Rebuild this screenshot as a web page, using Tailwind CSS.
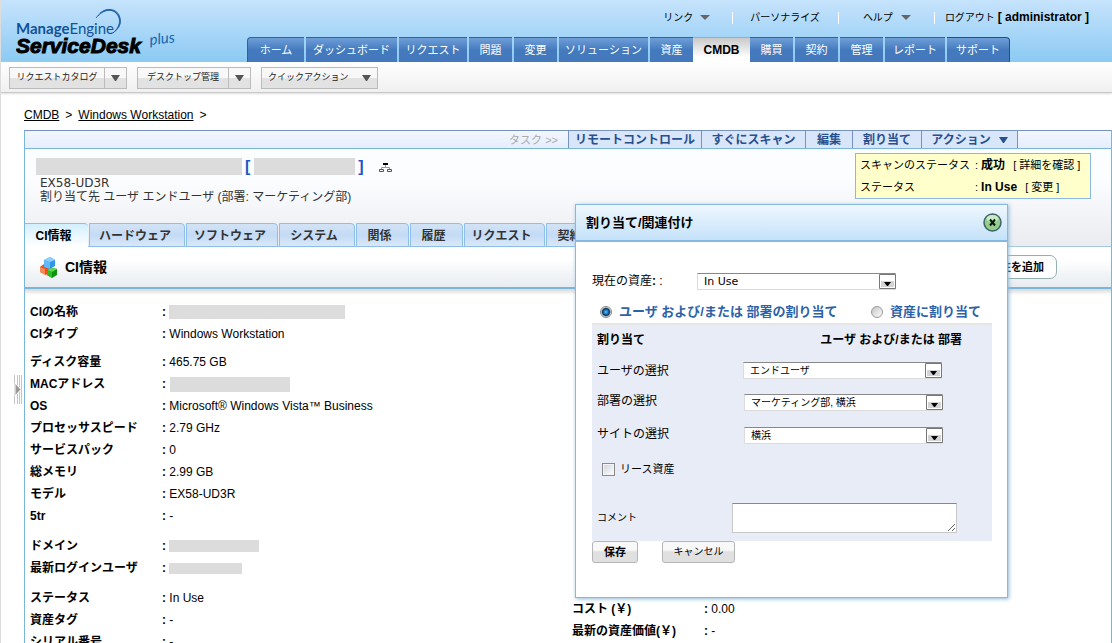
<!DOCTYPE html>
<html lang="ja">
<head>
    <meta charset="UTF-8">
    <meta name="viewport" content="width=device-width, initial-scale=1.0">
    <title>ManageEngine ServiceDesk Plus</title>
    <script src="https://cdn.jsdelivr.net/npm/@tailwindcss/browser@4"></script>
</head>
<body class="relative flex h-screen flex-col overflow-hidden border-l border-[#dcdcdc] bg-white font-['Liberation_Sans','Noto_Sans_CJK_JP',sans-serif] text-[12px] leading-[16px] text-black">

    <!-- Header -->
    <header class="flex h-[62px] shrink-0 justify-between bg-linear-to-b from-[#c6e3fc] to-[#8bcaf3]">
        <svg class="ml-[15px] mt-[6px] h-[56px] w-[170px] shrink-0" viewBox="0 0 170 56" role="img" aria-label="ManageEngine ServiceDesk plus">
            <g fill="none" stroke="#2263a8" stroke-width="0.900">
                <path d="M80 12 C86 3 95 2 100 7 C106 13 104 21 97 27"/>
                <path d="M82 10 C89 2 99 3 102 9 C106 16 103 22 98 26"/>
                <path d="M84 7 C92 1 100 4 103 10 C106 17 103 22 98 26"/>
                <path d="M87 5 C95 1 103 5 104 12 C105 18 103 22 98 26"/>
            </g>
            <text x="0" y="28" font-family="Lato, sans-serif" font-size="15" fill="#12529a"><tspan font-weight="700">Manage</tspan><tspan>Engine</tspan></text>
            <text x="0" y="47" font-family="Liberation Sans, sans-serif" font-size="21" font-weight="700" font-style="italic" fill="#000" stroke="#000" stroke-width="1">ServiceDesk</text>
            <text x="134" y="39" transform="rotate(-6 134 39)" font-family="Lato, sans-serif" font-size="15" font-style="italic" fill="#1668b0">plus</text>
        </svg>

        <div class="relative flex flex-1 flex-col justify-between">
            <!-- User links -->
            <nav class="mr-[23px] mt-[9px] flex items-center justify-end text-[10px]">
                <a href="#">リンク</a>
                <svg class="ml-[7px] mr-[22px] h-[5px] w-[10px]" viewBox="0 0 10 5"><path d="M0 0h10L5 5z" fill="#666"/></svg>
                <span class="mr-[17px] h-[12px] w-px bg-white"></span>
                <a href="#">パーソナライズ</a>
                <span class="ml-[18px] mr-[24px] h-[12px] w-px bg-white"></span>
                <a href="#">ヘルプ</a>
                <svg class="ml-[8px] mr-[23px] h-[5px] w-[10px]" viewBox="0 0 10 5"><path d="M0 0h10L5 5z" fill="#666"/></svg>
                <span class="mr-[10px] h-[12px] w-px bg-white"></span>
                <a href="#">ログアウト <b class="text-[12px]">[ administrator ]</b></a>
            </nav>

            <!-- Main tabs -->
            <nav class="ml-[61px] flex h-[25px] gap-[2px] text-center text-[11px] leading-[24px] text-white">
                <a href="#" class="w-[57px] rounded-tl-[4px] border-l border-t border-[#2d61a5] bg-linear-to-b from-[#6f9fd9] to-[#447abd] to-50%">ホーム</a>
                <a href="#" class="w-[91px] border-t border-[#2d61a5] bg-linear-to-b from-[#6f9fd9] to-[#447abd] to-50%">ダッシュボード</a>
                <a href="#" class="w-[68px] border-t border-[#2d61a5] bg-linear-to-b from-[#6f9fd9] to-[#447abd] to-50%">リクエスト</a>
                <a href="#" class="w-[43px] border-t border-[#2d61a5] bg-linear-to-b from-[#6f9fd9] to-[#447abd] to-50%">問題</a>
                <a href="#" class="w-[43px] border-t border-[#2d61a5] bg-linear-to-b from-[#6f9fd9] to-[#447abd] to-50%">変更</a>
                <a href="#" class="w-[89px] border-t border-[#2d61a5] bg-linear-to-b from-[#6f9fd9] to-[#447abd] to-50%">ソリューション</a>
                <a href="#" class="w-[43px] border-t border-[#2d61a5] bg-linear-to-b from-[#6f9fd9] to-[#447abd] to-50%">資産</a>
                <a href="#" class="-mx-[2px] w-[57px] border-t border-[#aaa] bg-linear-to-b from-[#c9c9c9] to-white to-80% text-[12px] font-bold text-black">CMDB</a>
                <a href="#" class="w-[43px] border-t border-[#2d61a5] bg-linear-to-b from-[#6f9fd9] to-[#447abd] to-50%">購買</a>
                <a href="#" class="w-[43px] border-t border-[#2d61a5] bg-linear-to-b from-[#6f9fd9] to-[#447abd] to-50%">契約</a>
                <a href="#" class="w-[43px] border-t border-[#2d61a5] bg-linear-to-b from-[#6f9fd9] to-[#447abd] to-50%">管理</a>
                <a href="#" class="w-[60px] border-t border-[#2d61a5] bg-linear-to-b from-[#6f9fd9] to-[#447abd] to-50%">レポート</a>
                <a href="#" class="w-[63px] rounded-tr-[4px] border-r border-t border-[#1f4f93] bg-linear-to-b from-[#6f9fd9] to-[#447abd] to-50%">サポート</a>
            </nav>
        </div>
    </header>

    <!-- Quick toolbar -->
    <div class="flex h-[31px] shrink-0 items-start gap-[10px] border-b border-[#c8c8c8] bg-linear-to-b from-white to-[#f0f0f0] pl-[8px] pt-[5px] text-[9px] text-[#222] shadow-[0_1px_2px_#ddd]">
        <div class="flex h-[22px] w-[118px] border border-[#bbb] bg-linear-to-b from-[#f8f8f8] from-50% to-[#e2e2e2] to-50%">
            <button class="flex-1 border-r border-[#bbb] pb-[2px]">リクエストカタログ</button>
            <button class="flex w-[21px] items-center justify-center" aria-label="リクエストカタログを開く"><svg class="h-[6px] w-[9px]" viewBox="0 0 9 6"><path d="M0 0h9L5 6H4z" fill="#555"/></svg></button>
        </div>
        <div class="flex h-[22px] w-[114px] border border-[#bbb] bg-linear-to-b from-[#f8f8f8] from-50% to-[#e2e2e2] to-50%">
            <button class="flex-1 border-r border-[#bbb] pb-[2px]">デスクトップ管理</button>
            <button class="flex w-[21px] items-center justify-center" aria-label="デスクトップ管理を開く"><svg class="h-[6px] w-[9px]" viewBox="0 0 9 6"><path d="M0 0h9L5 6H4z" fill="#555"/></svg></button>
        </div>
        <button class="flex h-[22px] w-[117px] items-center justify-between border border-[#bbb] bg-linear-to-b from-[#f8f8f8] from-50% to-[#e2e2e2] to-50% px-[6px]">
            <span class="pb-[2px]">クイックアクション</span>
            <svg class="h-[6px] w-[9px]" viewBox="0 0 9 6"><path d="M0 0h9L5 6H4z" fill="#555"/></svg>
        </button>
    </div>

    <!-- Breadcrumb -->
    <nav class="flex shrink-0 gap-[6px] pb-[7px] pl-[23px] pt-[14px]">
        <a href="#" class="underline">CMDB</a><span>&gt;</span><a href="#" class="underline">Windows Workstation</a><span>&gt;</span>
    </nav>

    <main class="ml-[23px] flex-1 border-x border-t border-[#7ab5da] border-t-[#7892c0]">
        <!-- Task bar -->
        <div class="flex h-[18px] border-b border-[#7ab5da] bg-linear-to-b from-[#f2f6ff] to-[#e6eefc] font-bold leading-[18px] text-[#27508f]">
            <div class="w-[543px] pr-[10px] text-right text-[11px] font-normal text-[#aaa]">タスク &gt;&gt;</div>
            <a href="#" class="w-[133px] border-l border-[#7892c0] bg-[#d9e5f9] text-center">リモートコントロール</a>
            <a href="#" class="w-[104px] border-l border-[#7892c0] bg-[#d9e5f9] text-center">すぐにスキャン</a>
            <a href="#" class="w-[47px] border-l border-[#7892c0] bg-[#d9e5f9] text-center">編集</a>
            <a href="#" class="w-[69px] border-l border-[#7892c0] bg-[#d9e5f9] text-center">割り当て</a>
            <a href="#" class="flex w-[97px] items-center justify-center gap-[8px] border-x border-[#7892c0] bg-[#d9e5f9]">アクション
                <svg class="h-[6px] w-[9px]" viewBox="0 0 9 6"><path d="M0 0h9L5 6H4z" fill="#27508f"/></svg>
            </a>
        </div>

        <!-- Asset summary -->
        <section class="flex h-[98px] flex-col justify-between border-b border-[#a5c8de] bg-linear-to-b from-[#fcfdff] from-30% to-[#e9ecf0]">
            <div class="flex items-start justify-between pl-[11px] pr-[20px] pt-[4px]">
                <div class="pt-[4px] text-[#333]">
                    <div class="flex h-[19px] items-center">
                        <span class="h-[17px] w-[206px] bg-[#dcdcdc]"></span>
                        <b class="ml-[3px] text-[16px] text-[#1f55c4]">[</b>
                        <span class="ml-[4px] h-[17px] w-[101px] bg-[#dcdcdc]"></span>
                        <b class="ml-[3px] text-[16px] text-[#1f55c4]">]</b>
                        <svg class="ml-[15px] mt-[3px] h-[10px] w-[13px]" viewBox="0 0 13 10" fill="none" stroke="#555"><path d="M6.500 2v3M2.500 7V4.500h8V7" stroke="#999"/><path d="M.5 6.500h4v2h-4zM8.500 6.500h4v2h-4z"/><path d="M4 1h5" stroke="#000" stroke-width="2"/></svg>
                    </div>
                    <div class="ml-[4px] font-['DejaVu_Sans',sans-serif] text-[12px] leading-[14px]">EX58-UD3R</div>
                    <div class="ml-[4px] leading-[14px]">割り当て先 ユーザ エンドユーザ (部署: マーケティング部)</div>
                </div>
                <dl class="grid w-[236px] grid-cols-[115px_1fr] border border-[#8bb8e0] bg-[#ffffcc] pl-[4px] text-[11px] leading-[22px]">
                    <dt class="whitespace-nowrap">スキャンのステータス</dt>
                    <dd class="whitespace-nowrap">:<b class="ml-[3px] text-[12px]">成功</b> <a href="#" class="ml-[5px]">[ 詳細を確認 ]</a></dd>
                    <dt>ステータス</dt>
                    <dd class="whitespace-nowrap">:<b class="ml-[3px] text-[12px]">In Use</b> <a href="#" class="ml-[5px]">[ 変更 ]</a></dd>
                </dl>
            </div>
            <nav class="-mb-px flex h-[24px] gap-px text-center font-bold leading-[24px] text-[#333]">
                <a href="#" class="w-[63px] rounded-tr-[4px] border-t border-[#8dbfe8] bg-linear-to-b from-[#d3effd] to-white pr-[6px] text-black">CI情報</a>
                <a href="#" class="w-[96px] rounded-tr-[4px] border border-[#8dbfe8] bg-linear-to-b from-[#d3e3f6] via-[#c3dbf5] to-[#d9e8f8] pr-[4px]">ハードウェア</a>
                <a href="#" class="w-[92px] rounded-tr-[4px] border border-[#8dbfe8] bg-linear-to-b from-[#d3e3f6] via-[#c3dbf5] to-[#d9e8f8] pr-[4px]">ソフトウェア</a>
                <a href="#" class="w-[76px] rounded-tr-[4px] border border-[#8dbfe8] bg-linear-to-b from-[#d3e3f6] via-[#c3dbf5] to-[#d9e8f8] pr-[6px]">システム</a>
                <a href="#" class="w-[53px] rounded-tr-[4px] border border-[#8dbfe8] bg-linear-to-b from-[#d3e3f6] via-[#c3dbf5] to-[#d9e8f8] pr-[6px]">関係</a>
                <a href="#" class="w-[53px] rounded-tr-[4px] border border-[#8dbfe8] bg-linear-to-b from-[#d3e3f6] via-[#c3dbf5] to-[#d9e8f8] pr-[6px]">履歴</a>
                <a href="#" class="w-[81px] rounded-tr-[4px] border border-[#8dbfe8] bg-linear-to-b from-[#d3e3f6] via-[#c3dbf5] to-[#d9e8f8] pr-[6px]">リクエスト</a>
                <a href="#" class="w-[53px] rounded-tr-[4px] border border-[#8dbfe8] bg-linear-to-b from-[#d3e3f6] via-[#c3dbf5] to-[#d9e8f8] pr-[6px]">契約</a>
            </nav>
        </section>

        <!-- Section title -->
        <div class="flex h-[42px] items-center justify-between border-b-2 border-[#7ab5da] bg-linear-to-b from-white from-30% to-[#e7ecf1] pl-[14px] pr-[54px]">
            <h2 class="flex items-center gap-[5px] text-[14px] font-bold">
                <svg class="h-[21px] w-[21px]" viewBox="0 0 21 21">
                    <path d="M1 10l4-3 6 2v6l-4 3-6-3z" fill="#e8501c"/><path d="M1 10l5 2v6l-5-3z" fill="#f58a52"/>
                    <path d="M5 3l6-3 5 3v6l-5 3-6-2z" fill="#2f96ea"/><path d="M5 3l6 2v7l-6-2z" fill="#62b8f8"/><path d="M5 3l6-3 5 3-5 2z" fill="#8fd0fb"/>
                    <path d="M8 13l5-2 5 1v6l-5 3-5-3z" fill="#0e9212"/><path d="M8 13l5 2v6l-5-3z" fill="#2fba28"/><path d="M8 13l5-2 5 1-5 3z" fill="#5fd84c"/>
                </svg>
                CI情報
            </h2>
            <button class="h-[24px] w-[98px] rounded-[7px] border border-[#96aeb0] bg-white pr-[12px] text-right text-[11px] font-bold">属性を追加</button>
        </div>
        <div class="h-[6px] bg-linear-to-b from-[#d8d8d8] to-white"></div>

        <!-- CI details -->
        <div class="grid grid-cols-2 pt-[6px]">
            <table class="ml-[5px] table-fixed self-start">
                <colgroup><col class="w-[132px]"><col></colgroup>
                <tbody class="text-left">
                    <tr class="h-[22px]"><th scope="row">CIの名称</th><td><div class="flex items-center gap-[3px]"><b>:</b><span class="h-[14px] w-[176px] bg-[#dcdcdc]"></span></div></td></tr>
                    <tr class="h-[22px]"><th scope="row">CIタイプ</th><td><b>:</b> Windows Workstation</td></tr>
                </tbody>
                <tbody class="text-left">
                    <tr class="h-[28px]"><th scope="row" class="pt-[6px]">ディスク容量</th><td class="pt-[6px]"><b>:</b> 465.75 GB</td></tr>
                    <tr class="h-[22px]"><th scope="row">MACアドレス</th><td><div class="flex items-center gap-[4px]"><b>:</b><span class="h-[15px] w-[120px] bg-[#dcdcdc]"></span></div></td></tr>
                    <tr class="h-[22px]"><th scope="row">OS</th><td><b>:</b> Microsoft® Windows Vista™ Business</td></tr>
                    <tr class="h-[22px]"><th scope="row">プロセッサスピード</th><td><b>:</b> 2.79 GHz</td></tr>
                    <tr class="h-[22px]"><th scope="row">サービスパック</th><td><b>:</b> 0</td></tr>
                    <tr class="h-[22px]"><th scope="row">総メモリ</th><td><b>:</b> 2.99 GB</td></tr>
                    <tr class="h-[22px]"><th scope="row">モデル</th><td><b>:</b> EX58-UD3R</td></tr>
                    <tr class="h-[22px]"><th scope="row">5tr</th><td><b>:</b> -</td></tr>
                </tbody>
                <tbody class="text-left">
                    <tr class="h-[30px]"><th scope="row" class="pt-[8px]">ドメイン</th><td class="pt-[8px]"><div class="flex items-center gap-[3px]"><b>:</b><span class="h-[12px] w-[90px] bg-[#dcdcdc]"></span></div></td></tr>
                    <tr class="h-[22px]"><th scope="row">最新ログインユーザ</th><td><div class="flex items-center gap-[3px]"><b>:</b><span class="h-[11px] w-[73px] bg-[#dcdcdc]"></span></div></td></tr>
                </tbody>
                <tbody class="text-left">
                    <tr class="h-[30px]"><th scope="row" class="pt-[8px]">ステータス</th><td class="pt-[8px]"><b>:</b> In Use</td></tr>
                    <tr class="h-[22px]"><th scope="row">資産タグ</th><td><b>:</b> -</td></tr>
                    <tr class="h-[22px]"><th scope="row">シリアル番号</th><td><b>:</b> -</td></tr>
                </tbody>
            </table>
            <table class="ml-[4px] mt-[297px] table-fixed self-start">
                <colgroup><col class="w-[132px]"><col></colgroup>
                <tbody class="text-left">
                    <tr class="h-[22px]"><th scope="row">コスト (￥)</th><td><b>:</b> 0.00</td></tr>
                    <tr class="h-[22px]"><th scope="row">最新の資産価値(￥)</th><td><b>:</b> -</td></tr>
                </tbody>
            </table>
        </div>
    </main>

    <!-- Side panel handle -->
    <button class="absolute left-[13px] top-[375px]" aria-label="サイドパネルを開く">
        <svg class="h-[29px] w-[9px]" viewBox="0 0 9 29"><path d="M.5 0v29M3.500 0v29M5.500 0v29M7.500 0v29" stroke="#c4c4c4"/><path d="M1 8l6 6.500L1 21z" fill="#999" stroke="#fff"/></svg>
    </button>

    <!-- Assign dialog -->
    <form class="absolute left-[574px] top-[204px] w-[433px] border border-[#86b9e2] bg-white pb-[34px] shadow-[1px_1px_4px_#8fb8d4]" role="dialog" aria-labelledby="dialogTitle" onsubmit="return false">
        <div class="flex h-[37px] items-center justify-between border-b-2 border-[#86b9e2] bg-linear-to-b from-[#eff7fe] to-[#c5e2fa] pl-[10px] pr-[5px]">
            <h2 id="dialogTitle" class="text-[13px] font-bold">割り当て/関連付け</h2>
            <button type="button" aria-label="閉じる">
                <svg class="h-[19px] w-[19px]" viewBox="0 0 19 19"><circle cx="9.500" cy="9.500" r="8.500" fill="#8fce8c" stroke="#41606a" stroke-width="1.500"/><ellipse cx="9.500" cy="5.500" rx="6" ry="3.500" fill="#c9ebc5"/><path d="M7 6.500l5 6M12 6.500l-5 6" stroke="#111" stroke-width="2"/></svg>
            </button>
        </div>

        <div class="pl-[16px] pr-[15px] pt-[29px]">
            <div class="flex h-[20px] items-center">
                <label for="assetState" class="w-[105px]">現在の資産<b>:</b> :</label>
                <div class="relative flex">
                    <select id="assetState" class="h-[17px] w-[199px] appearance-none border border-[#dcdcdc] border-t-[#888] bg-white pl-[6px] pt-px font-['DejaVu_Sans',sans-serif] text-[11px] leading-[14px]"><option>In Use</option></select>
                    <svg class="pointer-events-none absolute right-0 top-px h-[15px] w-[17px]" viewBox="0 0 17 15"><path d="M.5.5h16v14H.5z" fill="#fff" stroke="#777"/><path d="M2 7h13v6H2z" fill="#d4d4d4"/><path d="M5 8h7l-3 4H8z"/></svg>
                </div>
            </div>

            <div class="flex h-[32px] items-center pl-[8px] pt-[10px] text-[13px] font-bold text-[#2e62a8]">
                <input type="radio" id="assignUser" name="assign" checked class="h-[12px] w-[12px] appearance-none rounded-full border border-[#888] bg-[#e4e4e4] bg-radial from-[#3bb0f0] from-10% via-[#0d3a66] via-50% to-[#eeeeee] to-70%">
                <label for="assignUser" class="ml-[7px] w-[252px]">ユーザ および/または 部署の割り当て</label>
                <input type="radio" id="assignAsset" name="assign" class="h-[12px] w-[12px] appearance-none rounded-full border border-[#999] bg-linear-to-br from-[#c4c4c4] to-white">
                <label for="assignAsset" class="ml-[7px]">資産に割り当て</label>
            </div>

            <div class="border-t-2 border-[#e6e6e6] bg-[#e8ecf6] pb-[8px] pl-[5px] pr-[30px]">
                <div class="flex h-[30px] items-center justify-between font-bold"><span>割り当て</span><span>ユーザ および/または 部署</span></div>
                <div class="flex h-[31px] items-center">
                    <label for="userSelect" class="w-[146px]">ユーザの選択</label>
                    <div class="relative flex">
                        <select id="userSelect" class="h-[17px] w-[199px] appearance-none border border-[#dcdcdc] border-t-[#888] bg-white pl-[6px] text-[10px] leading-[14px]"><option>エンドユーザ</option></select>
                        <svg class="pointer-events-none absolute right-0 top-px h-[15px] w-[17px]" viewBox="0 0 17 15"><path d="M.5.5h16v14H.5z" fill="#fff" stroke="#777"/><path d="M2 7h13v6H2z" fill="#d4d4d4"/><path d="M5 8h7l-3 4H8z"/></svg>
                    </div>
                </div>
                <div class="flex h-[33px] items-center">
                    <label for="deptSelect" class="w-[147px] pb-[3px]">部署の選択</label>
                    <div class="relative flex">
                        <select id="deptSelect" class="h-[17px] w-[199px] appearance-none border border-[#dcdcdc] border-t-[#888] bg-white pl-[6px] text-[10px] leading-[14px]"><option>マーケティング部, 横浜</option></select>
                        <svg class="pointer-events-none absolute right-0 top-px h-[15px] w-[17px]" viewBox="0 0 17 15"><path d="M.5.5h16v14H.5z" fill="#fff" stroke="#777"/><path d="M2 7h13v6H2z" fill="#d4d4d4"/><path d="M5 8h7l-3 4H8z"/></svg>
                    </div>
                </div>
                <div class="flex h-[33px] items-center">
                    <label for="siteSelect" class="w-[147px] pb-[3px]">サイトの選択</label>
                    <div class="relative flex">
                        <select id="siteSelect" class="h-[17px] w-[199px] appearance-none border border-[#dcdcdc] border-t-[#888] bg-white pl-[6px] text-[10px] leading-[14px]"><option>横浜</option></select>
                        <svg class="pointer-events-none absolute right-0 top-px h-[15px] w-[17px]" viewBox="0 0 17 15"><path d="M.5.5h16v14H.5z" fill="#fff" stroke="#777"/><path d="M2 7h13v6H2z" fill="#d4d4d4"/><path d="M5 8h7l-3 4H8z"/></svg>
                    </div>
                </div>
                <div class="flex h-[34px] items-center pl-[5px]">
                    <input type="checkbox" id="lease" class="h-[13px] w-[13px] appearance-none border border-[#8a8a8a] bg-linear-to-br from-[#cfd3da] to-white shadow-[inset_0_0_0_1px_#f4f4f4]">
                    <label for="lease" class="ml-[5px] text-[11px]">リース資産</label>
                </div>
                <div class="flex items-center pt-[17px]">
                    <label for="comment" class="w-[135px] text-[10px]">コメント</label>
                    <textarea id="comment" class="h-[30px] w-[225px] resize border border-[#c8c8c8] border-t-[#888] bg-white"></textarea>
                </div>
            </div>

            <div class="flex gap-[24px] text-[11px]">
                <button type="submit" class="h-[22px] w-[46px] rounded-[3px] border border-[#b5b5b5] bg-linear-to-b from-[#f8f8f8] from-40% to-[#e0e0e0] to-50% font-bold">保存</button>
                <button type="button" class="h-[22px] w-[73px] rounded-[3px] border border-[#b5b5b5] bg-linear-to-b from-[#f8f8f8] from-40% to-[#e0e0e0] to-50% text-[10px]">キャンセル</button>
            </div>
        </div>
    </form>
</body>
</html>
